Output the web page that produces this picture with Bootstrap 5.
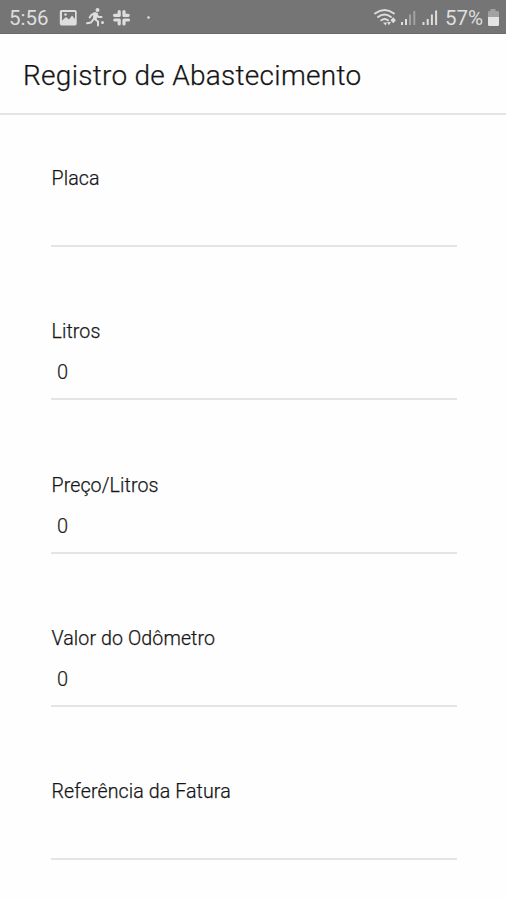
<!DOCTYPE html>
<html lang="pt-BR">
<head>
<meta charset="utf-8">
<meta name="viewport" content="width=device-width, initial-scale=1">
<title>Registro de Abastecimento</title>
<link rel="stylesheet" href="https://cdn.jsdelivr.net/npm/bootstrap@5.3.0/dist/css/bootstrap.min.css">
<style>
body { font-family: Roboto, "Liberation Sans", sans-serif; background: #fefefe; color: #151515; overflow: hidden; }
.status { height: 34px; background: #757575; color: #dedede; border-bottom: 1px solid #6a6a6a; padding: 1px 6px 0 9px; }
.status svg { display: block; flex: none; }
.clock { font-size: 20.5px; line-height: 33px; width: 49px; padding-top: 2px; white-space: nowrap; }
.charge { font-size: 20.5px; line-height: 33px; width: 42px; padding-top: 2px; margin-left: 2px; white-space: nowrap; }
.titlebar { height: 81px; border-bottom: 2px solid #e4e4e4; padding: 0 23px; }
.titlebar h1 { font-size: 28px; line-height: 40px; font-weight: 300; letter-spacing: .28px; margin: 5px 0 0; white-space: nowrap; -webkit-text-stroke: .25px #151515; }
.form-area { padding: 50px 49px 0 51px; }
.entry { height: 153.3px; }
.entry label { display: block; font-size: 19.6px; line-height: 28px; font-weight: 300; letter-spacing: .1px; padding-left: .5px; -webkit-text-stroke: .25px #151515; }
.entry .form-control { height: 54px; padding: 3px 6px; border: 0; border-bottom: 2px solid #e4e4e4; border-radius: 0; background: transparent; font-size: 20px; line-height: 24px; font-weight: 300; color: #202020; -webkit-text-stroke: .2px #202020; }
</style>
</head>
<body>
<div class="status d-flex align-items-center">
  <span class="clock">5:56</span>
  <svg width="100" height="32" viewBox="58 1 100 32" fill="#dedede">
    <path fill-rule="evenodd" d="M61.500 10h13.500q1.700 0 1.700 1.700v12.100q0 1.700-1.700 1.700h-13.500q-1.700 0-1.700-1.700v-12.100q0-1.700 1.700-1.700zM62 12v8.500l4-3.500 3 2.500 3-4 3 3.500v-7z"/>
    <circle cx="65.500" cy="14.500" r="1.300"/>
    <g fill="none" stroke="#dedede" stroke-width="2" stroke-linecap="round" stroke-linejoin="round">
      <path d="M87 23.200l4-.7 3-4 1.500-5-4 1.200-1.800 2.800M96 14l2.500 3h3M94.500 19l3.500 2.500v4"/>
    </g>
    <path d="M93.500 12l4.500 1-1.500 7-3.500-1z"/>
    <circle cx="97.500" cy="10" r="2"/><circle cx="102.500" cy="22.500" r="1.500"/>
    <g stroke="#dedede" stroke-width="3.200" stroke-linecap="round">
      <path d="M119.200 11.500v4M124 15.500v-4M114.500 15.300h4.800M124.200 15.300h4M114.800 20h4M124 20h4.500M119.200 20v4M124 20v4"/>
    </g>
    <circle cx="148.500" cy="17.500" r="1.300"/>
  </svg>
  <svg class="ms-auto" width="70" height="32" viewBox="373 1 70 32" fill="#dedede">
    <g fill="none" stroke="#dedede" stroke-width="1.900" stroke-linecap="round">
      <path d="M375 13.500q9.500-7 19 0M378 17q6.500-5 13 0M381.300 20.300q3.400-2.700 6.700 0"/>
    </g>
    <path d="M383 22.500l2.500 3 1.500-3zM387 22h4l-2 3.300zM390.500 20.300l2.700-3 2.700 3-2.700 3z"/>
    <path d="M401 22h2v3h-2zM405 19h2v6h-2z"/>
    <path d="M409 14.500h2V25h-2zM413.300 11h2V25h-2z" fill="#a2a2a2"/>
    <path d="M422.500 22h2v3h-2zM426.700 19h2v6h-2zM430.900 14.500h2V25h-2zM435.100 10.500h2V25h-2z"/>
  </svg>
  <span class="charge">57%</span>
  <svg width="13" height="32" viewBox="487 1 13 32">
    <path d="M490.500 9h5v2h2.200q1.300 0 1.300 1.300V17h-11v-4.700q0-1.300 1.300-1.300h1.200z" fill="#a2a2a2"/>
    <path d="M488 17h11v7.500q0 1.500-1.500 1.500h-8q-1.500 0-1.500-1.500z" fill="#e4e4e4"/>
  </svg>
</div>
<header class="titlebar d-flex align-items-center"><h1>Registro de Abastecimento</h1></header>
<form class="form-area">
  <div class="entry"><label for="placa">Placa</label><input class="form-control" id="placa" type="text"></div>
  <div class="entry"><label for="litros">Litros</label><input class="form-control" id="litros" type="text" value="0"></div>
  <div class="entry"><label for="preco">Preço/Litros</label><input class="form-control" id="preco" type="text" value="0"></div>
  <div class="entry"><label for="odometro">Valor do Odômetro</label><input class="form-control" id="odometro" type="text" value="0"></div>
  <div class="entry"><label for="fatura">Referência da Fatura</label><input class="form-control" id="fatura" type="text"></div>
</form>
<script src="https://cdn.jsdelivr.net/npm/bootstrap@5.3.0/dist/js/bootstrap.bundle.min.js"></script>
</body>
</html>
